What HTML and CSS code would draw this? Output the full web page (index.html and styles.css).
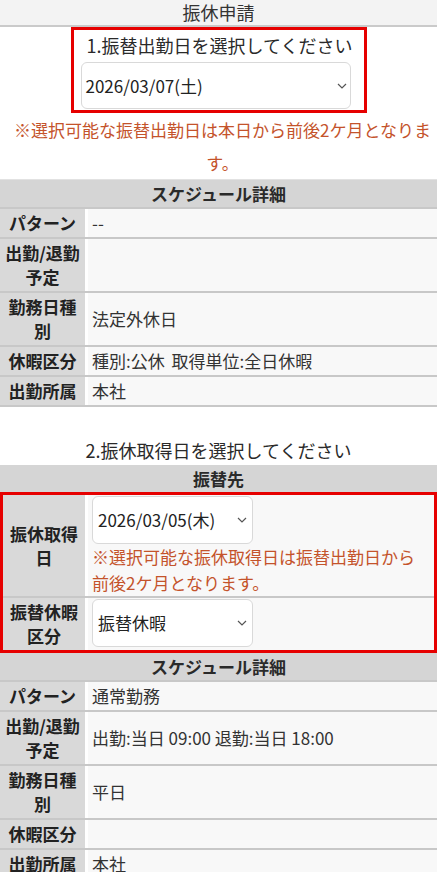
FILE: index.html
```html
<!DOCTYPE html>
<html lang="ja">
<head>
  <meta charset="UTF-8" />
  <meta name="viewport" content="width=device-width, initial-scale=1.0"/>
  <title>振休申請</title>
  <link rel="stylesheet" href="styles.css">
</head>
<body>
  <div class="page">
    <div class="titlebar">振休申請</div>

    <div class="pick">
      <div class="pick-title">1.振替出勤日を選択してください</div>
      <div class="select wide">
        <span>2026/03/07(土)</span>
        <svg width="10" height="6" viewBox="0 0 10 6"><path d="M1 1l4 4 4-4" fill="none" stroke="#555" stroke-width="1.2"/></svg>
      </div>
    </div>
    <p class="note center">※選択可能な振替出勤日は本日から前後2ケ月となります。</p>

    <div class="detail top-line">
      <div class="detail-head">スケジュール詳細</div>
      <div class="row"><div class="label">パターン</div><div class="value">--</div></div>
      <div class="row"><div class="label">出勤/退勤予定</div><div class="value"></div></div>
      <div class="row"><div class="label">勤務日種別</div><div class="value">法定外休日</div></div>
      <div class="row"><div class="label">休暇区分</div><div class="value wide-gap">種別:公休 取得単位:全日休暇</div></div>
      <div class="row"><div class="label">出勤所属</div><div class="value">本社</div></div>
    </div>

    <div class="step">2.振休取得日を選択してください</div>

    <div class="detail">
      <div class="detail-head flat">振替先</div>
      <div class="highlight">
        <div class="row">
          <div class="label">振休取得日</div>
          <div class="value stack">
            <div class="select narrow">
              <span>2026/03/05(木)</span>
              <svg width="10" height="6" viewBox="0 0 10 6"><path d="M1 1l4 4 4-4" fill="none" stroke="#555" stroke-width="1.2"/></svg>
            </div>
            <p class="note">※選択可能な振休取得日は振替出勤日から前後2ケ月となります。</p>
          </div>
        </div>
        <div class="row">
          <div class="label">振替休暇区分</div>
          <div class="value stack">
            <div class="select narrow">
              <span>振替休暇</span>
              <svg width="10" height="6" viewBox="0 0 10 6"><path d="M1 1l4 4 4-4" fill="none" stroke="#555" stroke-width="1.2"/></svg>
            </div>
          </div>
        </div>
      </div>
    </div>

    <div class="detail">
      <div class="detail-head">スケジュール詳細</div>
      <div class="row"><div class="label">パターン</div><div class="value">通常勤務</div></div>
      <div class="row"><div class="label">出勤/退勤予定</div><div class="value">出勤:当日 09:00 退勤:当日 18:00</div></div>
      <div class="row"><div class="label">勤務日種別</div><div class="value">平日</div></div>
      <div class="row"><div class="label">休暇区分</div><div class="value"></div></div>
      <div class="row"><div class="label">出勤所属</div><div class="value">本社</div></div>
    </div>
  </div>
</body>
</html>
```

FILE: styles.css
```css
body {
  margin: 0;
  padding: 0;
  background-color: #fff;
  color: #2a2a2a;
  font-family: "Noto Sans CJK JP", "Noto Sans", sans-serif;
  font-size: 17px;
}
.page {
  width: 437px;
}
.titlebar {
  height: 25px;
  line-height: 25px;
  text-align: center;
  font-size: 18px;
  background-color: #f3f3f3;
  border-bottom: 2px solid #cacaca;
  color: #333;
}
.pick {
  width: 296px;
  margin: 0 auto;
  border: 3px solid #e60000;
  padding: 0 13px 1px 7px;
  box-sizing: border-box;
}
.pick-title {
  line-height: 30px;
  font-size: 18px;
  text-align: center;
  padding-left: 6px;
  white-space: nowrap;
}
.select {
  display: flex;
  align-items: center;
  justify-content: space-between;
  background-color: #fff;
  border: 1px solid #d9d9d9;
  border-radius: 6px;
  box-sizing: border-box;
  padding: 0 5px 0 4px;
  color: #222;
}
.select.wide {
  width: 270px;
  height: 47px;
  margin-top: 2px;
  padding-right: 3px;
}
.select.narrow {
  width: 161px;
  height: 48px;
  padding-left: 5px;
}
.note {
  margin: 0;
  color: #c4532b;
  line-height: 26px;
}
.note.center {
  text-align: center;
  line-height: 33px;
  padding: 0 0 0 8px;
}
.detail.top-line {
  border-top: 1px solid #e2e2e2;
}
.detail-head {
  height: 27px;
  line-height: 27px;
  text-align: center;
  font-weight: bold;
  background-color: #d5d5d5;
  border-bottom: 2px solid #c8c8c8;
}
.detail-head.flat {
  border-bottom: none;
}
.row {
  display: grid;
  grid-template-columns: 85px 1fr;
  border-bottom: 2px solid #c8c8c8;
}
.label {
  display: flex;
  align-items: center;
  justify-content: center;
  text-align: center;
  background-color: #d9d9d9;
  font-weight: bold;
  line-height: 24px;
  padding: 2px 4px;
  color: #222;
}
.value {
  display: flex;
  align-items: center;
  background-color: #f8f8f8;
  border-left: 3px solid #fff;
  line-height: 24px;
  padding: 2px 4px;
  color: #333;
}
.value.wide-gap {
  word-spacing: 3px;
}
.value.stack {
  flex-direction: column;
  align-items: flex-start;
  padding: 1px 4px 0 4px;
}
.step {
  margin-top: 28px;
  line-height: 30px;
  font-size: 18px;
  text-align: center;
}
.highlight {
  border: 3px solid #e60000;
}
.highlight .row {
  grid-template-columns: 82px 1fr;
}
.highlight .row:last-child {
  border-bottom: none;
}
```
